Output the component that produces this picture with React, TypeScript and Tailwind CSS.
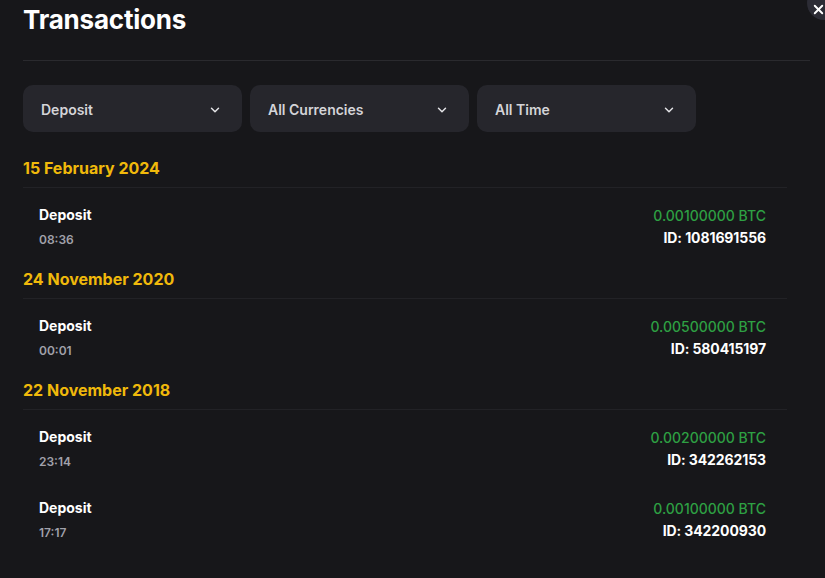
import { ChevronDown, X } from 'lucide-react'

type Tx = { time: string; amount: string; id: string }
type Group = { date: string; items: Tx[] }

const groups: Group[] = [
  { date: '15 February 2024', items: [{ time: '08:36', amount: '0.00100000 BTC', id: '1081691556' }] },
  { date: '24 November 2020', items: [{ time: '00:01', amount: '0.00500000 BTC', id: '580415197' }] },
  {
    date: '22 November 2018',
    items: [
      { time: '23:14', amount: '0.00200000 BTC', id: '342262153' },
      { time: '17:17', amount: '0.00100000 BTC', id: '342200930' },
    ],
  },
]

const filters = ['Deposit', 'All Currencies', 'All Time']

export default function App() {
  return (
    <div
      className="relative w-[825px] h-[578px] overflow-hidden bg-[#17171a] text-white"
      style={{ fontFamily: 'Inter, "Noto Sans", sans-serif' }}
    >
      <button className="absolute -top-[14px] -right-[16px] w-[34px] h-[34px] rounded-full bg-[#2c2c35] flex items-center justify-center">
        <X size={15} strokeWidth={3} className="text-white -translate-x-[6px] translate-y-[6px]" />
      </button>

      <div className="pl-[23px] pr-[15px]">
        <div className="pt-[4px] pb-[24px] border-b border-[#2a2a2e]">
          <h1 className="text-[26px] leading-[32px] font-bold tracking-[-0.2px]">Transactions</h1>
        </div>

        <div className="flex gap-2 mt-[24px]">
          {filters.map(f => (
            <div
              key={f}
              className="w-[219px] h-[47px] rounded-[10px] bg-[#26262c] flex items-center justify-between pl-[18px] pr-[20px] pt-[2px]"
            >
              <span className="text-[14px] font-semibold text-[#d4d4d8]">{f}</span>
              <ChevronDown size={14} strokeWidth={2.5} className="text-[#e4e4e7]" />
            </div>
          ))}
        </div>

        <div className="mt-[24px] w-[764px]">
          {groups.map(g => (
            <div key={g.date} className="mb-[5px]">
              <div className="pb-[7px] border-b border-[#222226]">
                <h2 className="text-[16px] leading-[24px] font-bold text-[#f0b90b]">{g.date}</h2>
              </div>
              <div className="mt-[3px]">
                {g.items.map(tx => (
                  <div key={tx.id} className="flex items-center justify-between pl-[16px] pr-[21px] py-[14px]">
                    <div className="flex flex-col gap-[7px]">
                      <span className="text-[14px] leading-[20px] font-bold text-white">Deposit</span>
                      <span className="text-[12px] leading-[16px] font-semibold text-[#a1a1aa]">{tx.time}</span>
                    </div>
                    <div className="flex flex-col items-end gap-[2px] pt-[1px]">
                      <span className="text-[14px] leading-[20px] font-medium text-[#2ea043]">{tx.amount}</span>
                      <span className="text-[14px] leading-[20px] font-bold text-white tracking-[-0.1px]">ID: {tx.id}</span>
                    </div>
                  </div>
                ))}
              </div>
            </div>
          ))}
        </div>
      </div>
    </div>
  )
}
